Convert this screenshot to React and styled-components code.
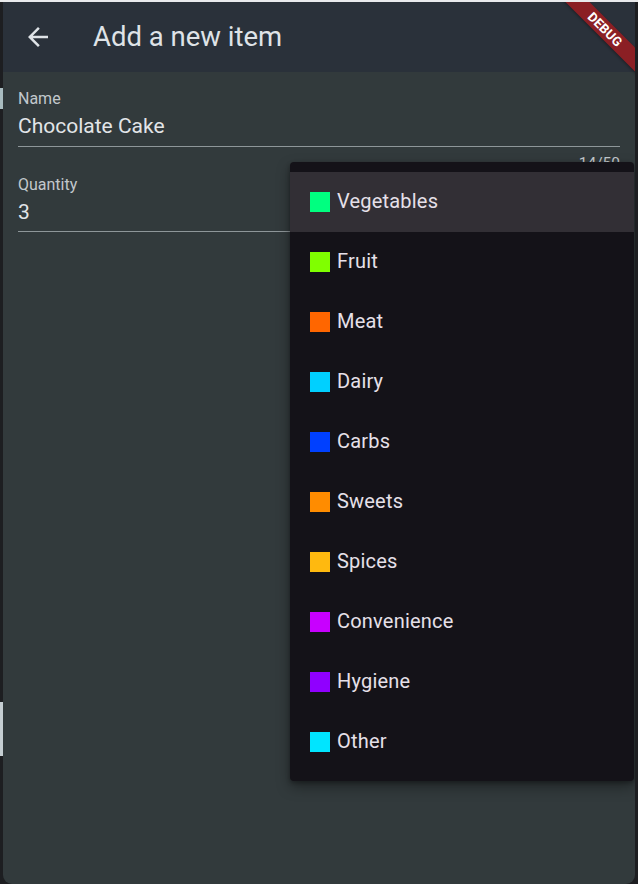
import React from "react";
import styled, { createGlobalStyle } from "styled-components";

const Global = createGlobalStyle`
  html, body { margin: 0; padding: 0; background: #1d1e21; }
  body { font-family: Roboto, "Liberation Sans", sans-serif; }
  * { box-sizing: border-box; }
`;

const Frame = styled.div`
  width: 638px;
  height: 884px;
  display: flex;
  flex-direction: column;
  background: #1d1e21;
  overflow: hidden;
`;

const TopLine = styled.div`
  height: 2px;
  flex: none;
  background: #e9eaec;
`;

const Row = styled.div`
  flex: 1;
  display: flex;
  min-height: 0;
`;

const SideStrip = styled.div`
  width: ${(p) => p.$w}px;
  flex: none;
  display: flex;
  flex-direction: column;
  background: #1d1e21;
`;

const StripBit = styled.div`
  height: ${(p) => p.$h}px;
  margin-top: ${(p) => p.$mt}px;
  background: ${(p) => p.$c};
  flex: none;
`;

const Window = styled.div`
  position: relative;
  width: 632px;
  flex: none;
  display: flex;
  flex-direction: column;
  background: #323a3c;
  border-radius: 0 0 9px 9px;
  overflow: hidden;
`;

const AppBar = styled.header`
  height: 70px;
  flex: none;
  display: flex;
  align-items: center;
  background: #2a313a;
  color: #dfe3e7;
`;

const BackButton = styled.div`
  width: 30px;
  height: 30px;
  margin-left: 20px;
  display: flex;
  align-items: center;
  justify-content: center;
`;

const Title = styled.h1`
  margin: 0 0 0 40px;
  font-size: 27.5px;
  font-weight: 400;
  line-height: 34px;
  color: #dfe3e7;
`;

const Banner = styled.div`
  position: absolute;
  left: 542px;
  top: 19px;
  width: 120px;
  height: 17px;
  transform: rotate(45deg);
  background: #8b1f24;
  box-shadow: 0 1px 3px rgba(0, 0, 0, 0.35);
  display: flex;
  align-items: center;
  justify-content: center;
  color: #ffffff;
  font-size: 13px;
  font-weight: 700;
  letter-spacing: 0.2px;
`;

const Body = styled.main`
  flex: 1;
  padding: 17px 15px 0;
  display: flex;
  flex-direction: column;
`;

const Field = styled.div`
  display: flex;
  flex-direction: column;
  margin-top: ${(p) => p.$mt || 0}px;
`;

const Label = styled.div`
  font-size: 16px;
  line-height: 20px;
  color: #c2c8cc;
`;

const Value = styled.div`
  margin-top: 3px;
  font-size: 21px;
  line-height: 28px;
  color: #e2e5e8;
  padding-bottom: ${(p) => p.$pb}px;
  border-bottom: 1px solid #8e9699;
`;

const Counter = styled.div`
  margin-top: 6px;
  align-self: flex-end;
  font-size: 15.5px;
  line-height: 20px;
  color: #c2c8cc;
`;

const Menu = styled.ul`
  position: absolute;
  left: 287px;
  top: 160px;
  width: 344px;
  margin: 0;
  padding: 10px 0 9px;
  list-style: none;
  background: #141218;
  border-radius: 4px;
  box-shadow: 0 6px 14px rgba(0, 0, 0, 0.35), 0 2px 4px rgba(0, 0, 0, 0.3);
`;

const MenuItem = styled.li`
  height: 60px;
  display: flex;
  align-items: center;
  padding: 0 0 1px 20px;
  gap: 7px;
  background: ${(p) => (p.$active ? "#322f35" : "transparent")};
  color: #e6e0e9;
  font-size: 20px;
  letter-spacing: 0.2px;
`;

const Swatch = styled.span`
  width: 20px;
  height: 20px;
  flex: none;
  background: ${(p) => p.$c};
`;

const ItemText = styled.span`
  margin-top: -1px;
`;

const categories = [
  ["Vegetables", "#00ff80"],
  ["Fruit", "#80ff00"],
  ["Meat", "#ff6600"],
  ["Dairy", "#00d0ff"],
  ["Carbs", "#0040ff"],
  ["Sweets", "#ff8c00"],
  ["Spices", "#ffb90f"],
  ["Convenience", "#c800ff"],
  ["Hygiene", "#9000ff"],
  ["Other", "#00e5ff"],
];

export default function App() {
  return (
    <>
      <Global />
      <Frame>
        <TopLine />
        <Row>
          <SideStrip $w={3}>
            <StripBit $mt={86} $h={21} $c="#a9bcc0" />
            <StripBit $mt={593} $h={54} $c="#c5ced2" />
          </SideStrip>
          <Window>
            <AppBar>
              <BackButton>
                <svg width="30" height="30" viewBox="0 0 24 24" fill="#dfe3e7">
                  <path d="M20 11H7.83l5.59-5.59L12 4l-8 8 8 8 1.41-1.41L7.83 13H20v-2z" />
                </svg>
              </BackButton>
              <Title>Add a new item</Title>
            </AppBar>
            <Body>
              <Field>
                <Label>Name</Label>
                <Value $pb={6}>Chocolate Cake</Value>
                <Counter>14/50</Counter>
              </Field>
              <Field $mt={2}>
                <Label>Quantity</Label>
                <Value $pb={5}>3</Value>
              </Field>
            </Body>
            <Menu>
              {categories.map(([name, color], i) => (
                <MenuItem key={name} $active={i === 0}>
                  <Swatch $c={color} />
                  <ItemText>{name}</ItemText>
                </MenuItem>
              ))}
            </Menu>
            <Banner>DEBUG</Banner>
          </Window>
          <SideStrip $w={3} />
        </Row>
      </Frame>
    </>
  );
}
